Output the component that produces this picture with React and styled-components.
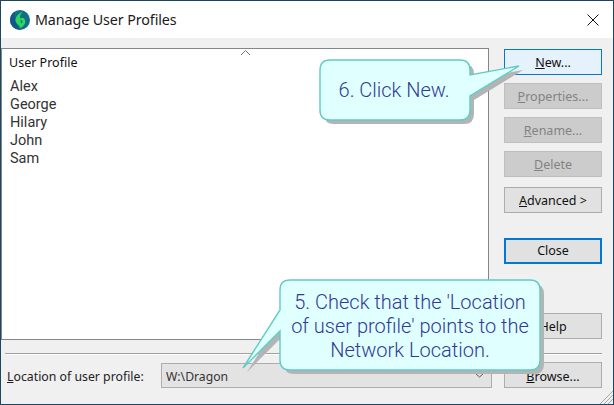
import React from 'react';
import styled, { createGlobalStyle } from 'styled-components';

const GlobalStyle = createGlobalStyle`
  html, body {
    margin: 0;
    padding: 0;
    background: #f0f0f0;
  }
`;

const Window = styled.div`
  position: relative;
  box-sizing: border-box;
  width: 614px;
  height: 405px;
  display: flex;
  flex-direction: column;
  background: #f0f0f0;
  border: 1px solid #1b4763;
  font-family: 'Open Sans', 'Noto Sans', sans-serif;
  font-size: 12px;
  color: #000;
  overflow: hidden;
`;

const TitleBar = styled.div`
  flex: none;
  height: 37px;
  display: flex;
  align-items: center;
  background: #fff;
  padding: 0 14px 0 9px;
  gap: 5px;
`;

const Title = styled.div`
  flex: 1;
  font-family: 'Noto Sans', sans-serif;
  font-size: 14.3px;
  letter-spacing: -0.1px;
  color: #1a1a1a;
`;

const Main = styled.div`
  flex: none;
  height: 291px;
  margin-top: 10px;
  display: flex;
`;

const ListPanel = styled.div`
  position: relative;
  box-sizing: border-box;
  width: 488px;
  height: 292px;
  background: #fff;
  border: 1px solid #82878c;
  padding: 5px 0 0 7px;
`;

const SortCaret = styled.svg`
  position: absolute;
  left: 238px;
  top: 0;
`;

const ListHeader = styled.div`
  height: 24px;
  line-height: 17px;
  font-family: 'Noto Sans', sans-serif;
  font-size: 12.5px;
  color: #111;
`;

const ListRow = styled.div`
  height: 18px;
  line-height: 18px;
  padding-left: 1px;
  font-family: 'Roboto', sans-serif;
  font-size: 14.5px;
  color: #333;
`;

const ButtonColumn = styled.div`
  display: flex;
  flex-direction: column;
  padding: 1px 0 0 15px;
`;

const Button = styled.div`
  box-sizing: border-box;
  flex: none;
  width: 98px;
  height: 26px;
  margin-top: ${(p) => p.$gap || 0}px;
  display: flex;
  align-items: center;
  justify-content: center;
  padding-bottom: ${(p) => (p.$variant === 'default' ? 2 : 0)}px;
  font-family: 'Noto Sans', sans-serif;
  font-size: 12.5px;
  background: ${(p) => (p.$variant === 'hot' ? '#e5f1fb' : p.$variant === 'off' ? '#cccccc' : '#e1e1e1')};
  color: ${(p) => (p.$variant === 'off' ? '#838383' : '#111')};
  border: ${(p) => {
    if (p.$variant === 'hot') return '1px solid #0078d7';
    if (p.$variant === 'default') return '2px solid #0078d7';
    if (p.$variant === 'off') return '1px solid #bfbfbf';
    return '1px solid #adadad';
  }};
`;

const BrowseButton = styled(Button)`
  padding-top: 2px;
`;

const Divider = styled.div`
  flex: none;
  height: 1px;
  margin: 14px 11px 0 4px;
  background: #a0a0a0;
  border-bottom: 1px solid #fff;
`;

const BottomRow = styled.div`
  flex: none;
  height: 26px;
  margin-top: 7px;
  padding: 0 11px 0 6px;
  display: flex;
  align-items: center;
`;

const FieldLabel = styled.div`
  width: 154px;
  padding-top: 2px;
  font-family: 'Noto Sans', sans-serif;
  font-size: 12.3px;
  color: #222;
`;

const Combo = styled.div`
  box-sizing: border-box;
  width: 331px;
  height: 25px;
  margin-right: 12px;
  padding: 0 6px 0 4px;
  display: flex;
  align-items: center;
  justify-content: space-between;
  background: #e3e3e3;
  border: 1px solid #adadad;
  font-family: 'Noto Sans', sans-serif;
  font-size: 12.2px;
  color: #333;
`;

const ComboValue = styled.span`
  padding-top: 2px;
`;

const Grip = styled.svg`
  position: absolute;
  right: 0;
  bottom: 0;
`;

const Callout = styled.div`
  position: absolute;
  left: ${(p) => p.$left}px;
  top: ${(p) => p.$top}px;
  width: ${(p) => p.$width}px;
  height: ${(p) => p.$height}px;
  display: flex;
  align-items: center;
  justify-content: center;
  text-align: center;
`;

const CalloutShape = styled.svg`
  position: absolute;
  left: 0;
  top: 0;
  overflow: visible;
`;

const CalloutText = styled.div`
  position: relative;
  top: ${(p) => p.$shift}px;
  left: ${(p) => p.$nudge}px;
  font-family: 'Roboto', sans-serif;
  font-weight: 300;
  font-size: 20px;
  line-height: 24px;
  color: #2f3a96;
`;

// rounded box with a pointed tail, tail runs off the left or right side
const bubblePath = (w, h, r, tail) => {
  const right = tail.side === 'right'
    ? `L${w} ${tail.y1} L${tail.x} ${tail.y} L${w} ${tail.y2} `
    : '';
  const left = tail.side === 'left'
    ? `L0 ${tail.y2} L${tail.x} ${tail.y} L0 ${tail.y1} `
    : '';
  return `M${r} 0 H${w - r} Q${w} 0 ${w} ${r} ${right}V${h - r} Q${w} ${h} ${w - r} ${h} H${r} Q0 ${h} 0 ${h - r} ${left}V${r} Q0 0 ${r} 0 Z`;
};

const Bubble = ({ left, top, width, height, tail, shift, nudge, children }) => {
  const d = bubblePath(width, height, 10, tail);
  return (
    <Callout $left={left} $top={top} $width={width} $height={height}>
      <CalloutShape width={width} height={height} viewBox={`0 0 ${width} ${height}`}>
        <path d={d} transform="translate(4 4)" fill="#b4b4b4" />
        <path d={d} fill="#e0ffff" stroke="#5fcdc4" strokeWidth="1.4" />
      </CalloutShape>
      <CalloutText $shift={shift} $nudge={nudge}>{children}</CalloutText>
    </Callout>
  );
};

const DragonLogo = () => (
  <svg width="20" height="20" viewBox="0 0 20 20">
    <circle cx="10" cy="10" r="10" fill="#0f6f86" />
    <path d="M10 20 A10 10 0 0 1 0 10 A10 10 0 0 1 5 1.5 Q3 9 9 19 Z" fill="#14558a" />
    <path
      d="M12.5 1.5 C7.5 4 4 8.5 6.2 12.6 C7.4 14.8 9.8 15.4 10 18 C13.6 16.6 16 13.4 15 10 C14.3 7.6 11.8 7 10 8.6 C9.8 6 10.8 3.6 12.5 1.5 Z M10.4 10.4 C12 9.6 13 11.4 11.8 13.6 C11.2 12.6 10.4 11.8 10.4 10.4 Z"
      fill="#2fd65c"
      fillRule="evenodd"
    />
  </svg>
);

const CloseIcon = () => (
  <svg width="12" height="12" viewBox="0 0 12 12">
    <path d="M0.5 0.5 L11.5 11.5 M11.5 0.5 L0.5 11.5" stroke="#111" strokeWidth="1" fill="none" />
  </svg>
);

const profiles = ['Alex', 'George', 'Hilary', 'John', 'Sam'];

const App = () => (
  <>
    <GlobalStyle />
    <Window>
      <TitleBar>
        <DragonLogo />
        <Title>Manage User Profiles</Title>
        <CloseIcon />
      </TitleBar>

      <Main>
        <ListPanel>
          <SortCaret width="11" height="7" viewBox="0 0 11 7">
            <path d="M1 6 L5.5 1.5 L10 6" stroke="#777" fill="none" />
          </SortCaret>
          <ListHeader>User Profile</ListHeader>
          {profiles.map((name) => (
            <ListRow key={name}>{name}</ListRow>
          ))}
        </ListPanel>

        <ButtonColumn>
          <Button $variant="hot"><span><u>N</u>ew...</span></Button>
          <Button $variant="off" $gap={8}><span><u>P</u>roperties...</span></Button>
          <Button $variant="off" $gap={8}><span><u>R</u>ename...</span></Button>
          <Button $variant="off" $gap={8}><span><u>D</u>elete</span></Button>
          <Button $gap={10}><span><u>A</u>dvanced &gt;</span></Button>
          <Button $variant="default" $gap={25}>Close</Button>
          <Button $gap={49}>Help</Button>
        </ButtonColumn>
      </Main>

      <Divider />

      <BottomRow>
        <FieldLabel><u>L</u>ocation of user profile:</FieldLabel>
        <Combo>
          <ComboValue>W:\Dragon</ComboValue>
          <svg width="11" height="6" viewBox="0 0 11 6">
            <path d="M1 1 L5.5 5 L10 1" stroke="#555" fill="none" />
          </svg>
        </Combo>
        <BrowseButton><span><u>B</u>rowse...</span></BrowseButton>
      </BottomRow>

      <Grip width="14" height="14" viewBox="0 0 14 14">
        <path d="M14 1 L1 14 M14 5 L5 14 M14 9 L9 14" stroke="#a8a8a8" fill="none" />
      </Grip>

      <Bubble left={319} top={59} width={150} height={60} shift={0} nudge={-1} tail={{ side: 'right', x: 199, y: 6, y1: 15, y2: 36 }}>
        6. Click New.
      </Bubble>

      <Bubble left={279} top={279} width={260} height={90} shift={1} nudge={0} tail={{ side: 'left', x: -37, y: 88, y1: 30, y2: 51 }}>
        5. Check that the 'Location<br />
        of user profile' points to the<br />
        Network Location.
      </Bubble>
    </Window>
  </>
);

export default App;
